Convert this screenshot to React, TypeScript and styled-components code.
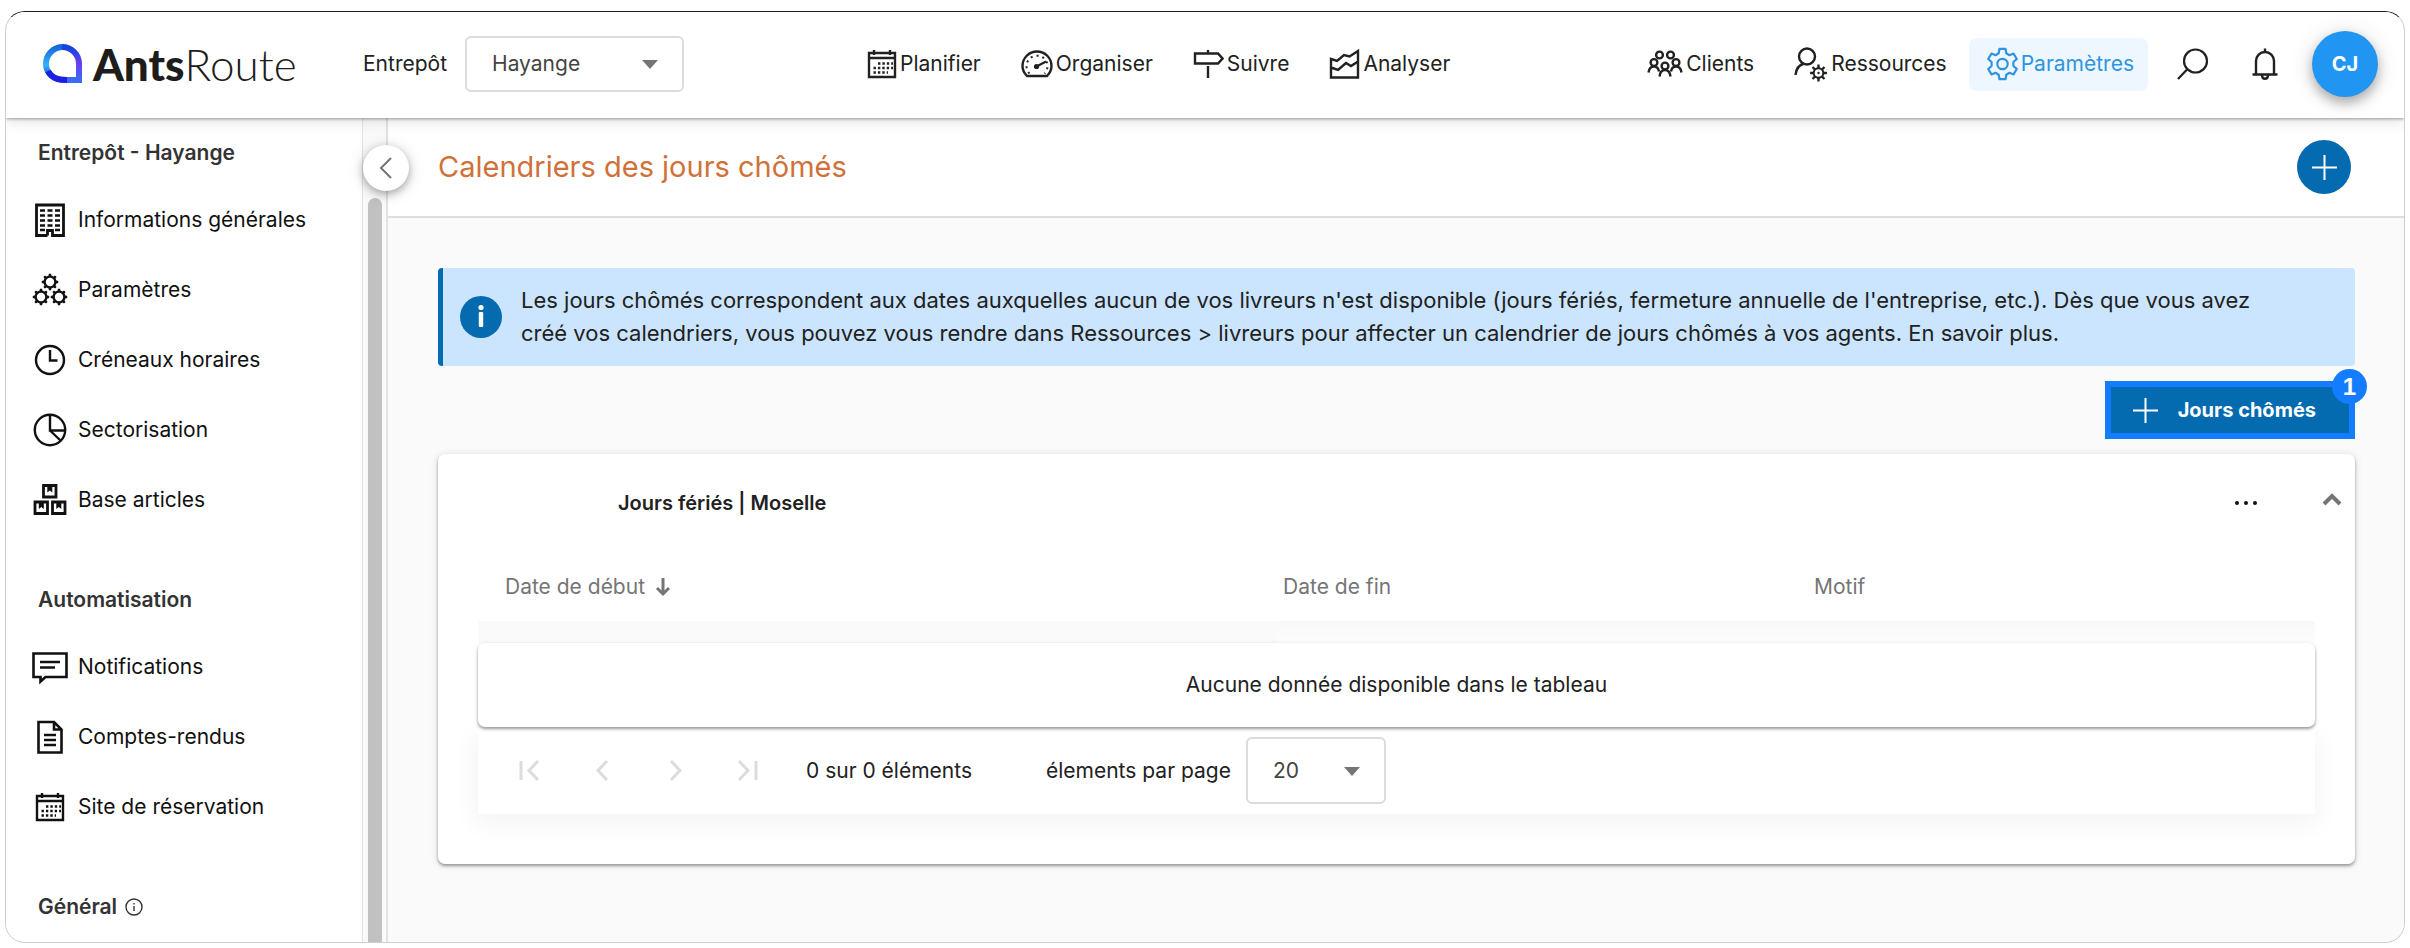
import React from 'react';
import styled, { createGlobalStyle } from 'styled-components';

const GlobalStyle = createGlobalStyle`
  *, *::before, *::after { box-sizing: border-box; }
  body {
    margin: 0;
    background: #fff;
    color: #212121;
    font-family: Inter, 'Open Sans', sans-serif;
    font-size: 21px;
    line-height: 32px;
  }
  button, select { font: inherit; color: inherit; }
  button { padding: 0; border: 0; background: none; cursor: pointer; }
  a { color: inherit; text-decoration: none; }
  h1, h2, p, ul { margin: 0; padding: 0; }
  svg { display: block; flex: none; }
`;

const Page = styled.div`
  display: flex;
  min-height: 100vh;
  padding: 11px 5px 6px;
`;

const Frame = styled.div`
  display: flex;
  flex: 1;
  flex-direction: column;
  min-width: 0;
  overflow: hidden;
  border: 1px solid #cfcfcf;
  border-top-color: #1c1c1c;
  border-radius: 20px;
`;

const Header = styled.header`
  position: relative;
  z-index: 2;
  display: flex;
  align-items: center;
  height: 106px;
  padding: 0 26px 2px 37px;
  background: #fff;
  box-shadow: 0 1px 3px rgba(0, 0, 0, 0.35), 0 3px 14px rgba(0, 0, 0, 0.12);
`;

const Brand = styled.a`
  display: flex;
  align-items: center;
  gap: 10px;
  width: 320px;
`;

const BrandName = styled.span`
  color: #1d1d1b;
  font-family: Lato, sans-serif;
  font-size: 44px;
  font-weight: 300;
  line-height: 48px;

  strong { font-weight: 900; }
`;

const FieldLabel = styled.label`
  white-space: nowrap;
`;

const SelectBox = styled.span<{ $width: number; $height: number }>`
  position: relative;
  display: inline-flex;
  width: ${(p) => p.$width}px;
  height: ${(p) => p.$height}px;

  select {
    width: 100%;
    padding: 0 25px;
    border: 2px solid #dcdcdc;
    border-radius: 6px;
    background: #fff;
    color: #444;
    appearance: none;
  }

  svg {
    position: absolute;
    top: calc(50% - 4px);
    right: 26px;
    pointer-events: none;
  }
`;

const Warehouse = styled.div`
  display: flex;
  align-items: center;
  gap: 18px;
`;

const Nav = styled.nav<{ $centered?: boolean }>`
  display: flex;
  gap: 8px;
  margin: ${(p) => (p.$centered ? '0 auto' : '0')};
`;

const NavLink = styled.a<{ $active?: boolean }>`
  display: flex;
  align-items: center;
  gap: 3px;
  height: 53px;
  padding: 0 14px 0 18px;
  border-radius: 8px;
  background: ${(p) => (p.$active ? '#eef7ff' : 'transparent')};
  color: ${(p) => (p.$active ? '#2f94e0' : '#212121')};
  white-space: nowrap;
`;

const Tools = styled.div`
  display: flex;
  align-items: center;
  gap: 22px;
  margin-left: 20px;
`;

const IconButton = styled.button`
  display: grid;
  place-items: center;
  width: 50px;
  height: 50px;
`;

const Avatar = styled.button`
  width: 66px;
  height: 66px;
  border-radius: 50%;
  background: #2095f2;
  color: #fff;
  font-size: 20px;
  font-weight: 700;
  box-shadow: 0 6px 12px rgba(0, 0, 0, 0.28), 0 2px 24px rgba(0, 0, 0, 0.12);
`;

const Body = styled.div`
  display: flex;
  flex: 1;
`;

const Sidebar = styled.aside`
  display: flex;
  flex-direction: column;
  gap: 33px;
  width: 356px;
  padding: 3px 0 0 26px;
  background: #fff;
`;

const GroupTitle = styled.h2`
  display: flex;
  align-items: center;
  gap: 8px;
  height: 64px;
  padding-left: 6px;
  color: #333;
  font-size: 21px;
  font-weight: 600;
`;

const MenuList = styled.ul`
  list-style: none;
`;

const MenuLink = styled.a`
  display: flex;
  align-items: center;
  gap: 10px;
  height: 70px;
  color: #111;
`;

const Rail = styled.div`
  position: relative;
  display: flex;
  flex-direction: column;
  align-items: center;
  width: 26px;
  padding-top: 80px;
  border: solid #e2e2e2;
  border-width: 0 2px 0 1px;
  background: #fafafa;
`;

const Thumb = styled.div`
  flex: 1;
  width: 14px;
  border-radius: 7px 7px 0 0;
  background: #c1c1c1;
`;

const CollapseButton = styled.button`
  position: absolute;
  z-index: 1;
  top: 27px;
  left: 0;
  display: grid;
  place-items: center;
  width: 46px;
  height: 46px;
  border-radius: 50%;
  background: #fff;
  box-shadow: 0 3px 8px rgba(0, 0, 0, 0.3), 0 2px 18px rgba(0, 0, 0, 0.12);
`;

const Main = styled.main`
  flex: 1;
  min-width: 0;
  background: #fafafa;
`;

const TitleBar = styled.div`
  display: flex;
  align-items: center;
  justify-content: space-between;
  height: 100px;
  padding: 0 53px 0 50px;
  border-bottom: 2px solid #dedede;
  background: #fff;
`;

const Title = styled.h1`
  color: #d0713a;
  font-size: 29px;
  font-weight: 400;
  line-height: 36px;
`;

const AddButton = styled.button`
  display: grid;
  place-items: center;
  width: 54px;
  height: 54px;
  border-radius: 50%;
  background: #046bb0;
`;

const Content = styled.div`
  padding: 50px 49px 78px 50px;
`;

const Banner = styled.div`
  display: flex;
  align-items: center;
  gap: 19px;
  padding: 16px 40px 16px 17px;
  border-left: 5px solid #046bb0;
  border-radius: 4px;
  background: #cbe5ff;
  font-size: 22px;
  line-height: 33px;
`;

const Actions = styled.div`
  display: flex;
  justify-content: flex-end;
  margin: 15px 0;
`;

const PrimaryButton = styled.button`
  position: relative;
  display: flex;
  align-items: center;
  gap: 20px;
  height: 58px;
  padding: 0 33px 0 22px;
  border: 6px solid #147dff;
  background: #046bb0;
  color: #fff;
  font-size: 20px;
  font-weight: 700;
`;

const StepBadge = styled.span`
  position: absolute;
  top: -18px;
  right: -18px;
  width: 35px;
  height: 35px;
  border-radius: 50%;
  background: #147dff;
  font-family: 'Liberation Sans', sans-serif;
  font-size: 24px;
  line-height: 35px;
  text-align: center;
`;

const Card = styled.section`
  padding: 0 40px 50px;
  border-radius: 7px;
  background: #fff;
  box-shadow: 0 2px 3px rgba(0, 0, 0, 0.35), 0 1px 8px rgba(0, 0, 0, 0.12);
`;

const CardHeader = styled.div`
  display: flex;
  align-items: center;
  height: 98px;
  padding-left: 140px;
`;

const CardTitle = styled.h2`
  flex: 1;
  font-size: 20px;
  font-weight: 600;
`;

const CardTools = styled.div`
  display: flex;
  gap: 36px;
  margin-right: -42px;
`;

const DataTable = styled.table`
  width: 100%;
  border-spacing: 0;
  table-layout: fixed;

  th {
    height: 69px;
    padding: 0 6px;
    color: #757575;
    font-weight: 400;
    text-align: left;
  }
  th:first-child { width: 43.5%; padding-left: 27px; }
  th:nth-child(2) { width: 28.9%; }
`;

const SortButton = styled.button`
  display: flex;
  align-items: center;
  gap: 10px;
`;

const SpacerCell = styled.td<{ $sorted?: boolean }>`
  height: 22px;
  padding: 0;
  background: ${(p) => (p.$sorted ? '#fafafa' : 'linear-gradient(#f7f8fa, #fdfdfd)')};
`;

const EmptyCell = styled.td`
  position: relative;
  height: 84px;
  padding: 0;
  border-radius: 7px;
  background: #fff;
  box-shadow: 0 2px 3px rgba(0, 0, 0, 0.35), 0 1px 5px rgba(0, 0, 0, 0.1);
  text-align: center;
`;

const Pagination = styled.div`
  display: flex;
  align-items: center;
  height: 87px;
  padding: 0 27px;
  box-shadow: 0 8px 26px rgba(30, 40, 80, 0.06);
`;

const PageButtons = styled.div`
  display: flex;
  gap: 25px;
  margin-right: 34px;

  button {
    display: grid;
    place-items: center;
    width: 48px;
    height: 48px;
  }
`;

const Range = styled.p`
  width: 240px;
`;

const PageSize = styled.div`
  display: flex;
  align-items: center;
  gap: 15px;
`;

type SvgProps = { w?: number; h?: number; children: React.ReactNode; sw?: number; color?: string };

const Svg = ({ w = 36, h = 36, sw = 2, color = 'currentColor', children }: SvgProps) => (
  <svg width={w} height={h} viewBox={`0 0 ${w} ${h}`} fill="none" stroke={color} strokeWidth={sw} aria-hidden="true">
    {children}
  </svg>
);

const gear = (cx: number, cy: number, outer: number, inner: number, teeth: number) => {
  const step = (Math.PI * 2) / teeth;
  const points: string[] = [];
  for (let i = 0; i < teeth; i += 1) {
    const mid = i * step - Math.PI / 2;
    [[-0.27, inner], [-0.17, outer], [0.17, outer], [0.27, inner]].forEach(([k, r]) => {
      const angle = mid + k * step;
      points.push(`${(cx + r * Math.cos(angle)).toFixed(2)} ${(cy + r * Math.sin(angle)).toFixed(2)}`);
    });
  }
  return `M${points.join('L')}Z`;
};

const Caret = () => (
  <svg width="16" height="9" viewBox="0 0 16 9" fill="#757575" aria-hidden="true"><path d="M0 0h16L8 9z" /></svg>
);

const LogoMark = () => (
  <svg width="40" height="40" viewBox="0 0 40 40" fill="none" strokeWidth="6" aria-hidden="true">
    <defs>
      <linearGradient id="mark-left" x1="0" y1="0" x2="0" y2="1">
        <stop offset="0" stopColor="#1668dd" />
        <stop offset="0.55" stopColor="#35b4f5" />
        <stop offset="1" stopColor="#1c2fe0" />
      </linearGradient>
      <linearGradient id="mark-right" x1="0" y1="0" x2="0" y2="1">
        <stop offset="0" stopColor="#0f45e0" />
        <stop offset="0.5" stopColor="#6a3df0" />
        <stop offset="1" stopColor="#3b6cf6" />
      </linearGradient>
    </defs>
    <path d="M20 3A17 17 0 0 0 3 20C3 29 11 36 20 36" stroke="url(#mark-left)" />
    <path d="M19 3A17 17 0 0 1 36 20V36H19" stroke="url(#mark-right)" />
    <path d="M5 27C8 33 13 36 24 36" stroke="#1a22e0" />
  </svg>
);

const CalendarIcon = ({ box = 30 }: { box?: number }) => (
  <Svg w={box} h={30}>
    <g transform={`translate(${(box - 30) / 2} 0)`}>
      <path d="M2 4H28V28H2ZM2 9H28M7 1V6M23 1V6" strokeWidth="2.4" />
      <path d="M11 14.5H26M6.5 19H26M6.5 23.5H21" strokeDasharray="2.4 2" strokeWidth="2.4" />
    </g>
  </Svg>
);

const GaugeIcon = () => (
  <Svg w={32} h={30}>
    <path d="M6 27H26C29 24 30.5 21 30.5 17A14.5 14.5 0 0 0 1.5 17C1.5 21 3 24 6 27Z" strokeWidth="2.4" />
    <path d="M8.5 24.5A10.5 10.5 0 1 1 23.5 24.5" strokeDasharray="2 4" />
    <circle cx="15.5" cy="17.5" r="2.6" fill="currentColor" stroke="none" />
    <path d="M15.5 17.5L25 12.5" strokeWidth="2.2" />
  </Svg>
);

const SignIcon = () => (
  <Svg w={31} h={30}>
    <path d="M2 4.5H25L29.5 9.5L25 14.5H2ZM15 1V4M15 17V29" strokeWidth="2.4" />
  </Svg>
);

const ChartIcon = () => (
  <Svg w={31} h={32}>
    <path d="M2 11L8 13L15 7L20.5 8.5L29 3V29.5H2ZM2 19.5L9 22L17 15L22 18L29 13.5" strokeWidth="2.4" />
  </Svg>
);

const PeopleIcon = () => (
  <Svg w={36} h={30} sw={2.4}>
    <circle cx="12.5" cy="6" r="3.4" />
    <circle cx="23.5" cy="6" r="3.4" />
    <circle cx="7" cy="13.5" r="3.4" />
    <circle cx="29" cy="13.5" r="3.4" />
    <circle cx="18" cy="17" r="3.4" />
    <path d="M1.5 23.5C2 20 4 17.5 7 17.5S11.5 19.5 12 22.5M24 22.5C24.5 19.5 26 17.5 29 17.5S34 20 34.5 23.5M12.5 27.5C13 23.5 15 21 18 21S23 23.500 23.5 27.5" />
  </Svg>
);

const UserGearIcon = () => (
  <Svg w={34} h={36} sw={2.4}>
    <circle cx="13" cy="10.5" r="8" />
    <path d="M1.5 29C2 23 5 19 10 17.5" />
    <path d={gear(24.5, 27, 8.5, 5.8, 8)} fill="currentColor" stroke="none" />
    <circle cx="24.5" cy="27" r="3.8" fill="#fff" stroke="none" />
    <circle cx="24.5" cy="27" r="1.2" fill="currentColor" stroke="none" />
  </Svg>
);

const SettingsIcon = () => (
  <Svg w={31} h={34} sw={2.2}>
    <path d="M12.5 1.8H18.5L19.3 6.3L22.5 8.2L26.5 6.6L29.8 12L26.4 15V19L29.8 22L26.5 27.4L22.5 25.8L19.3 27.7L18.5 32.2H12.5L11.7 27.7L8.5 25.8L4.5 27.4L1.2 22L4.6 19V15L1.2 12L4.5 6.6L8.5 8.2L11.7 6.3Z" strokeLinejoin="round" />
    <circle cx="15.5" cy="17" r="5.2" />
  </Svg>
);

const SearchIcon = () => (
  <Svg w={34} h={34} sw={2.2}>
    <circle cx="19.5" cy="14" r="11.5" />
    <path d="M11.5 22L2 32" />
  </Svg>
);

const BellIcon = () => (
  <Svg w={28} h={34} sw={2.4}>
    <path d="M1.5 27.5H26.5M5 27V14A9 9 0 0 1 23 14V27M14 1.500V5M11 28C11 33 17 33 17 28" />
  </Svg>
);

const BuildingIcon = () => (
  <Svg w={36} h={36} sw={2.8}>
    <path d="M15.5 33.5H4.5V3H31.5V33.5H20.5V28.5H15.5V33.5" />
    <path d="M8 8.5H28M8 13.5H28M8 18.5H28M8 23.5H28M8 28H13M23 28H28" strokeWidth="2.4" strokeDasharray="5 2.5" />
  </Svg>
);

const GearsIcon = () => (
  <Svg sw={0}>
    {[[18, 10], [9, 25], [27, 25]].map(([x, y]) => (
      <g key={`${x}-${y}`}>
        <path d={gear(x, y, 8.3, 6.6, 8)} fill="currentColor" />
        <circle cx={x} cy={y} r="4.2" fill="#fff" />
      </g>
    ))}
  </Svg>
);

const ClockIcon = () => (
  <Svg sw={2.4}>
    <circle cx="18" cy="18" r="14" />
    <path d="M18 8V18.5H25.5" />
  </Svg>
);

const PieIcon = () => (
  <Svg sw={2.4}>
    <circle cx="18" cy="18" r="15.2" />
    <path d="M18 3V18.5H33M18 18.5L29 29" />
  </Svg>
);

const BoxesIcon = () => (
  <Svg sw={2.8}>
    {[[11.5, 3.5], [3, 20], [20.5, 20]].map(([x, y]) => (
      <g key={`${x}-${y}`} transform={`translate(${x} ${y})`}>
        <path d="M0 0H12.5V11.5H0Z" />
        <path d="M3.800 0V7L6.3 5L8.8 7V0Z" fill="currentColor" stroke="none" />
      </g>
    ))}
  </Svg>
);

const ChatIcon = () => (
  <Svg sw={2.6}>
    <path d="M1.5 4.5H34.5V28H13.5L8.5 32.5V28H1.5ZM8 13H28M8 18.5H23" />
  </Svg>
);

const DocumentIcon = () => (
  <Svg sw={2.6}>
    <path d="M6.5 3H22L29.5 10.5V33.5H6.5ZM22 3V10.5H29.5M12 16H24M12 21H24M12 26H24" />
  </Svg>
);

const InfoOutlineIcon = () => (
  <Svg w={18} h={18} sw={1.4}>
    <circle cx="9" cy="9" r="8" />
    <path d="M9 8V13M9 5V6.4" />
  </Svg>
);

const InfoIcon = () => (
  <svg width="42" height="42" viewBox="0 0 42 42" aria-hidden="true">
    <circle cx="21" cy="21" r="21" fill="#046bb0" />
    <circle cx="21" cy="11.5" r="2.6" fill="#fff" />
    <rect x="18.8" y="16" width="4.4" height="15" rx="1" fill="#fff" />
  </svg>
);

const PlusIcon = () => (
  <Svg w={25} h={25} color="#fff"><path d="M12.5 0V25M0 12.5H25" /></Svg>
);

const menu = [
  {
    title: 'Entrepôt - Hayange',
    items: [
      { label: 'Informations générales', icon: <BuildingIcon /> },
      { label: 'Paramètres', icon: <GearsIcon /> },
      { label: 'Créneaux horaires', icon: <ClockIcon /> },
      { label: 'Sectorisation', icon: <PieIcon /> },
      { label: 'Base articles', icon: <BoxesIcon /> },
    ],
  },
  {
    title: 'Automatisation',
    items: [
      { label: 'Notifications', icon: <ChatIcon /> },
      { label: 'Comptes-rendus', icon: <DocumentIcon /> },
      { label: 'Site de réservation', icon: <CalendarIcon box={36} /> },
    ],
  },
  { title: 'Général', info: true, items: [] },
];

const pagers = [
  { label: 'Première page', d: 'M4 3V22M21 3L12 12.5L21 22' },
  { label: 'Page précédente', d: 'M17 3L8 12.5L17 22' },
  { label: 'Page suivante', d: 'M8 3L17 12.5L8 22' },
  { label: 'Dernière page', d: 'M3 3L12 12.5L3 22M20 3V22' },
];

export default function App() {
  return (
    <>
      <GlobalStyle />
      <Page>
        <Frame>
          <Header>
            <Brand href="#">
              <LogoMark />
              <BrandName><strong>Ants</strong>Route</BrandName>
            </Brand>
            <Warehouse>
              <FieldLabel htmlFor="warehouse">Entrepôt</FieldLabel>
              <SelectBox $width={219} $height={56}>
                <select id="warehouse"><option>Hayange</option></select>
                <Caret />
              </SelectBox>
            </Warehouse>
            <Nav $centered>
              <NavLink href="#"><CalendarIcon />Planifier</NavLink>
              <NavLink href="#"><GaugeIcon />Organiser</NavLink>
              <NavLink href="#"><SignIcon />Suivre</NavLink>
              <NavLink href="#"><ChartIcon />Analyser</NavLink>
            </Nav>
            <Nav>
              <NavLink href="#"><PeopleIcon />Clients</NavLink>
              <NavLink href="#"><UserGearIcon />Ressources</NavLink>
              <NavLink href="#" $active><SettingsIcon />Paramètres</NavLink>
            </Nav>
            <Tools>
              <IconButton aria-label="Rechercher"><SearchIcon /></IconButton>
              <IconButton aria-label="Alertes"><BellIcon /></IconButton>
              <Avatar>CJ</Avatar>
            </Tools>
          </Header>
          <Body>
            <Sidebar>
              {menu.map((group) => (
                <div key={group.title}>
                  <GroupTitle>{group.title}{group.info && <InfoOutlineIcon />}</GroupTitle>
                  {group.items.length > 0 && (
                    <MenuList>
                      {group.items.map((item) => (
                        <li key={item.label}>
                          <MenuLink href="#">{item.icon}{item.label}</MenuLink>
                        </li>
                      ))}
                    </MenuList>
                  )}
                </div>
              ))}
            </Sidebar>
            <Rail>
              <CollapseButton aria-label="Réduire le menu">
                <Svg w={14} h={24} color="#757575"><path d="M12 2L2 12L12 22" /></Svg>
              </CollapseButton>
              <Thumb />
            </Rail>
            <Main>
              <TitleBar>
                <Title>Calendriers des jours chômés</Title>
                <AddButton aria-label="Ajouter"><PlusIcon /></AddButton>
              </TitleBar>
              <Content>
                <Banner>
                  <InfoIcon />
                  <p>
                    Les jours chômés correspondent aux dates auxquelles aucun de vos livreurs n'est disponible (jours
                    fériés, fermeture annuelle de l'entreprise, etc.). Dès que vous avez<br />
                    créé vos calendriers, vous pouvez vous rendre dans Ressources &gt; livreurs pour affecter un
                    calendrier de jours chômés à vos agents. En savoir plus.
                  </p>
                </Banner>
                <Actions>
                  <PrimaryButton>
                    <PlusIcon />
                    Jours chômés
                    <StepBadge>1</StepBadge>
                  </PrimaryButton>
                </Actions>
                <Card>
                  <CardHeader>
                    <CardTitle>Jours fériés | Moselle</CardTitle>
                    <CardTools>
                      <IconButton aria-label="Options">
                        <svg width="24" height="6" viewBox="0 0 24 6" fill="#111" aria-hidden="true">
                          <circle cx="3" cy="3" r="2" /><circle cx="12" cy="3" r="2" /><circle cx="21" cy="3" r="2" />
                        </svg>
                      </IconButton>
                      <IconButton aria-label="Replier">
                        <Svg w={20} h={20} sw={4} color="#757575"><path d="M2 11L10 3L18 11" /></Svg>
                      </IconButton>
                    </CardTools>
                  </CardHeader>
                  <DataTable>
                    <thead>
                      <tr>
                        <th scope="col">
                          <SortButton>
                            Date de début
                            <Svg w={16} h={20} sw={3} color="#757575"><path d="M8 1V17M2 11L8 17L14 11" /></Svg>
                          </SortButton>
                        </th>
                        <th scope="col">Date de fin</th>
                        <th scope="col">Motif</th>
                      </tr>
                    </thead>
                    <tbody>
                      <tr><SpacerCell $sorted /><SpacerCell /><SpacerCell /></tr>
                      <tr><EmptyCell colSpan={3}>Aucune donnée disponible dans le tableau</EmptyCell></tr>
                    </tbody>
                  </DataTable>
                  <Pagination>
                    <PageButtons>
                      {pagers.map((pager) => (
                        <button key={pager.label} aria-label={pager.label} disabled>
                          <Svg w={25} h={25} sw={3} color="#dcdcdc"><path d={pager.d} /></Svg>
                        </button>
                      ))}
                    </PageButtons>
                    <Range>0 sur 0 éléments</Range>
                    <PageSize>
                      <FieldLabel htmlFor="page-size">élements par page</FieldLabel>
                      <SelectBox $width={140} $height={67}>
                        <select id="page-size"><option>20</option></select>
                        <Caret />
                      </SelectBox>
                    </PageSize>
                  </Pagination>
                </Card>
              </Content>
            </Main>
          </Body>
        </Frame>
      </Page>
    </>
  );
}
